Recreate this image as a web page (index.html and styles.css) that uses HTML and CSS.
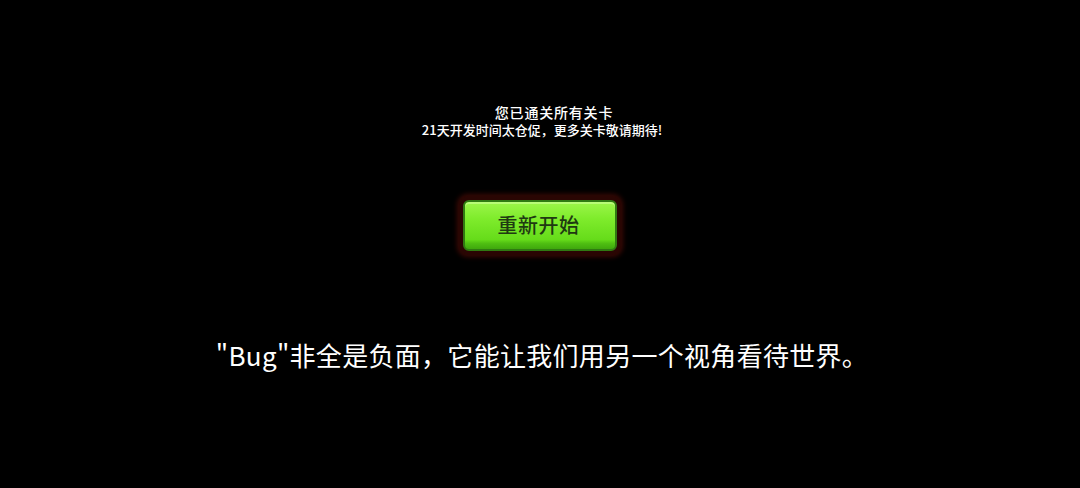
FILE: index.html
```html
<!DOCTYPE html>
<html lang="zh">
<head>
<meta charset="utf-8">
<link rel="stylesheet" href="styles.css">
</head>
<body>
<div class="screen">
  <div class="notice">
    <div class="line line1">您已通关所有关卡</div>
    <div class="line line2">21天开发时间太仓促，更多关卡敬请期待!</div>
  </div>
  <div class="btn-wrap">
    <div class="btn"><span class="btn-text">重新开始</span></div>
  </div>
  <div class="quote">"Bug"非全是负面，它能让我们用另一个视角看待世界。</div>
</div>
</body>
</html>
```
FILE: styles.css
```css
html, body {
  margin: 0;
  padding: 0;
  background: #000;
}
.screen {
  width: 1080px;
  height: 488px;
  background: #000;
  display: flex;
  flex-direction: column;
  align-items: center;
  font-family: "Noto Sans CJK SC", "Noto Sans", sans-serif;
  color: #fff;
}
.notice {
  margin-top: 103px;
  display: flex;
  flex-direction: column;
  align-items: center;
  line-height: 18px;
  font-weight: 500;
}
.line1 {
  font-size: 14px;
  letter-spacing: 0.8px;
  margin-left: 28px;
}
.line2 {
  font-size: 13px;
  letter-spacing: 0;
  margin-left: 4px;
}
.btn-wrap {
  margin-top: 57px;
  padding: 4px;
  border-radius: 9px;
  background: #2a0603;
  box-shadow: 0 0 5px 2px #3a0905;
}
.btn {
  width: 154px;
  height: 51px;
  box-sizing: border-box;
  border: 2px solid #2f7a12;
  border-radius: 6px;
  background: linear-gradient(#9cf54a 0%, #7fec2c 35%, #66dc1a 80%, #4fbf12 88%, #3fa80d 100%);
  box-shadow: inset 0 2px 0 #b8fb77;
  display: flex;
  align-items: center;
  justify-content: center;
}
.btn-text {
  font-size: 20px;
  color: #1f3a12;
  font-weight: 500;
  letter-spacing: 0.5px;
  margin-top: -2px;
  margin-left: -3px;
}
.quote {
  margin-top: 82px;
  margin-left: 4px;
  font-size: 26px;
  line-height: 36px;
  font-weight: 400;
  letter-spacing: 0.3px;
}
```
